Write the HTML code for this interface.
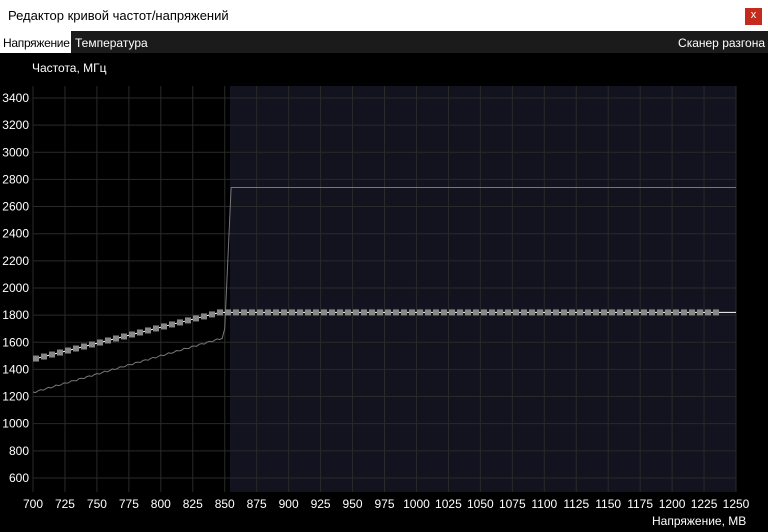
<!DOCTYPE html><html><head><meta charset="utf-8"><style>
body{margin:0;width:768px;height:532px;background:#000;font-family:"Liberation Sans",sans-serif;overflow:hidden;position:relative}
.t{position:absolute;left:0;top:0;width:768px;height:31px;background:#fff;font-size:13px;color:#000}
.t span{position:absolute;left:8px;top:8px}
.x{position:absolute;left:745px;top:8px;width:17px;height:17px;background:#c42b1c;color:#fff;font-size:11px;text-align:center;line-height:15px}
.tb{position:absolute;left:0;top:31px;width:768px;height:22px;background:#1b1b1b;font-size:12px;color:#fff}
.tb div{position:absolute;top:5px;white-space:nowrap}
</style></head><body>
<div class="t"><span>Редактор кривой частот/напряжений</span><div class="x">x</div></div>
<div class="tb"><div style="left:0;top:0;width:71px;height:22px;background:#fff"></div><div style="left:3px;color:#000;letter-spacing:-0.3px">Напряжение</div><div style="left:75px">Температура</div><div style="right:3px">Сканер разгона</div></div>
<div style="position:absolute;left:32px;top:61px;font-size:12px;color:#fff">Частота, МГц</div>
<div style="position:absolute;left:652px;top:514px;font-size:12px;color:#fff">Напряжение, МВ</div>
<svg id="s" width="768" height="532" style="position:absolute;left:0;top:0" font-family="Liberation Sans" font-size="12" fill="#fff"></svg>
<script>
var s=document.getElementById('s'),h='';
function X(v){return 33+(v-700)*703/550}function Y(f){return 98+(3400-f)*27.14/200}
h+='<rect x="230" y="86" width="506" height="406" fill="#13121f"/>';
for(var v=700;v<=1250;v+=25){var x=X(v);h+='<line x1="'+x+'" y1="86" x2="'+x+'" y2="492" stroke="#2a2a2a"/>';h+='<text x="'+x+'" y="508" text-anchor="middle">'+v+'</text>';}
for(var f=600;f<=3400;f+=200){var y=Y(f);h+='<line x1="33" y1="'+y+'" x2="736" y2="'+y+'" stroke="#2a2a2a"/>';h+='<text x="29" y="'+(y+4)+'" text-anchor="end">'+f+'</text>';}
var p='';for(var v=700;v<=848;v+=2){var f=1230+(v-700)/148*400+Math.sin(v)*6;p+=X(v)+','+Y(f)+' ';}
p+=X(850)+','+Y(1700)+' '+X(855)+','+Y(2740)+' 736,'+Y(2740);
h+='<polyline points="'+p+'" fill="none" stroke="#777" stroke-width="1"/>';
var q='',r='';for(var i=0;;i++){var x=36+i*8;if(x>720)break;var f=x<228?1480+(x-36)/(220-36)*340:1820;if(f>1820)f=1820;var y=Y(f);q+=x+','+y+' ';r+='<rect x="'+(x-3)+'" y="'+(y-3)+'" width="6" height="6" fill="#888"/>';}
h+='<polyline points="'+q+' 736,'+Y(1820)+'" fill="none" stroke="#fff"/>'+r;
s.innerHTML=h;
</script>
</body></html>
